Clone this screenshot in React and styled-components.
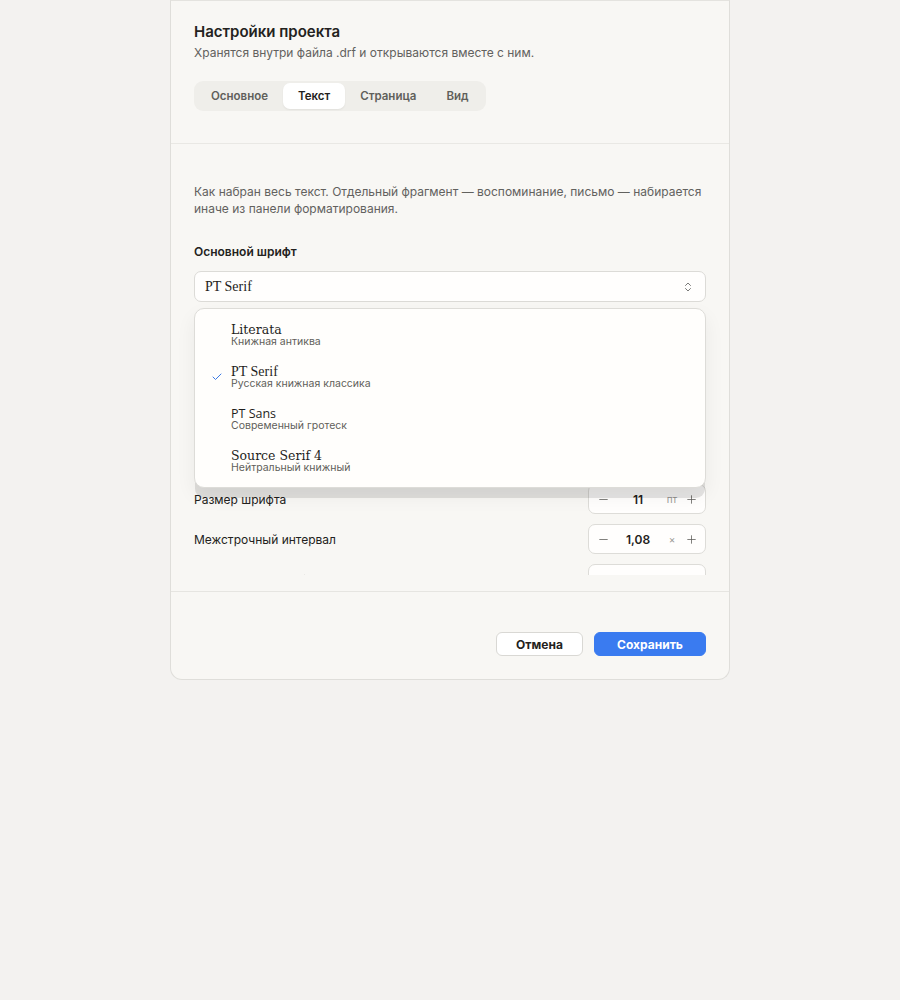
import { useState } from 'react'
import styled, { createGlobalStyle } from 'styled-components'
import { Check, ChevronsUpDown, Minus, Plus } from 'lucide-react'

const fonts = [
   { id: 'literata', name: 'Literata', note: 'Книжная антиква', family: '"DejaVu Serif", serif', size: 12.5 },
   { id: 'pt-serif', name: 'PT Serif', note: 'Русская книжная классика', family: '"Liberation Serif", serif', size: 14 },
   { id: 'pt-sans', name: 'PT Sans', note: 'Современный гротеск', family: '"Open Sans", sans-serif', size: 12.5 },
   { id: 'source-serif', name: 'Source Serif 4', note: 'Нейтральный книжный', family: '"DejaVu Serif", serif', size: 12.5 },
]

const tabs = ['Основное', 'Текст', 'Страница', 'Вид']

const steppers = [
   { label: 'Размер шрифта', value: '11', unit: 'пт' },
   { label: 'Межстрочный интервал', value: '1,08', unit: '×' },
   { label: 'Интервал после абзаца', value: '6', unit: 'пт' },
]

export default function App() {
   const [tab, setTab] = useState('Текст')
   const [font, setFont] = useState('pt-serif')
   const current = fonts.find((f) => f.id === font)

   return (
      <>
         <GlobalStyle />
         <Dialog>
            <Header>
               <Title>Настройки проекта</Title>
               <Subtitle>Хранятся внутри файла .drf и открываются вместе с ним.</Subtitle>
               <Tabs>
                  {tabs.map((t) => (
                     <Tab key={t} active={t === tab} onClick={() => setTab(t)}>
                        {t}
                     </Tab>
                  ))}
               </Tabs>
            </Header>

            <BodyWrap>
               <Scroll>
                  <Hint>
                     Как набран весь текст. Отдельный фрагмент — воспоминание, письмо — набирается
                     иначе из панели форматирования.
                  </Hint>

                  <Field first>
                     <Label>Основной шрифт</Label>
                     <SelectWrap>
                        <Select>
                           <SelectValue family={current.family}>{current.name}</SelectValue>
                           <ChevronsUpDown size={12} strokeWidth={2} color="#7a7a78" />
                        </Select>
                        <Menu>
                           {fonts.map((f) => (
                              <Option key={f.id} onClick={() => setFont(f.id)}>
                                 <CheckSlot>
                                    {f.id === font && <Check size={12} strokeWidth={2} color="#3b7ae6" />}
                                 </CheckSlot>
                                 <OptionText>
                                    <OptionName family={f.family} size={f.size}>{f.name}</OptionName>
                                    <OptionNote>{f.note}</OptionNote>
                                 </OptionText>
                              </Option>
                           ))}
                        </Menu>
                     </SelectWrap>
                  </Field>

                  <Field>
                     <Label>Шрифт заголовков</Label>
                     <Select>
                        <SelectValue family='"Liberation Serif", serif'>PT Serif</SelectValue>
                        <ChevronsUpDown size={12} strokeWidth={2} color="#7a7a78" />
                     </Select>
                  </Field>

                  <Field>
                     <Label>Шрифт примечаний</Label>
                     <Select>
                        <SelectValue family='"Open Sans", sans-serif'>PT Sans</SelectValue>
                        <ChevronsUpDown size={12} strokeWidth={2} color="#7a7a78" />
                     </Select>
                  </Field>

                  <Rows>
                     {steppers.map((s) => (
                        <Row key={s.label}>
                           <RowLabel>{s.label}</RowLabel>
                           <Stepper>
                              <StepButton>
                                 <Minus size={13} strokeWidth={1.4} />
                              </StepButton>
                              <StepValue>{s.value}</StepValue>
                              <StepUnit>{s.unit}</StepUnit>
                              <StepButton>
                                 <Plus size={13} strokeWidth={1.4} />
                              </StepButton>
                           </Stepper>
                        </Row>
                     ))}
                  </Rows>
               </Scroll>
            </BodyWrap>

            <Footer>
               <Button>Отмена</Button>
               <Button primary>Сохранить</Button>
            </Footer>
         </Dialog>
      </>
   )
}

const GlobalStyle = createGlobalStyle`
   body {
      margin: 0;
      background: #f3f2f0;
      font-family: Inter, "Noto Sans", sans-serif;
      color: #232220;
      -webkit-font-smoothing: antialiased;
   }
   * {
      box-sizing: border-box;
   }
`

const Dialog = styled.div`
   width: 560px;
   margin: 0 auto;
   background: #f8f7f4;
   border: 1px solid #dfdeda;
   border-top-color: #e4e3df;
   border-radius: 0 0 12px 12px;
`

const Header = styled.div`
   padding: 21px 23px 32px;
   border-bottom: 1px solid #e9e8e4;
`

const Title = styled.h2`
   margin: 0;
   font-size: 15px;
   line-height: 20px;
   font-weight: 600;
   color: #232220;
`

const Subtitle = styled.p`
   margin: 2px 0 0;
   font-size: 12px;
   line-height: 17px;
   color: #62615e;
`

const Tabs = styled.div`
   display: inline-flex;
   margin-top: 20px;
   padding: 2px;
   border-radius: 9px;
   background: #efeeea;
`

const Tab = styled.button`
   border: none;
   height: 26px;
   padding: 0 15px;
   border-radius: 7px;
   font-family: inherit;
   font-size: 11.5px;
   font-weight: 600;
   cursor: pointer;
   color: ${({ active }) => (active ? '#1f1e1c' : '#605f5b')};
   background: ${({ active }) => (active ? '#ffffff' : 'transparent')};
   box-shadow: ${({ active }) => (active ? '0 1px 2px rgba(0,0,0,0.06)' : 'none')};
`

const BodyWrap = styled.div`
   padding-bottom: 16px;
`

const Scroll = styled.div`
   height: 431px;
   overflow: hidden;
   padding: 39px 23px 0;
`

const Hint = styled.p`
   margin: 0;
   font-size: 12px;
   line-height: 17px;
   color: #62615e;
`

const Field = styled.div`
   margin-top: ${({ first }) => (first ? '27px' : '22px')};
`

const Label = styled.div`
   font-size: 12px;
   line-height: 16px;
   font-weight: 600;
   color: #232220;
   margin-bottom: 11px;
`

const SelectWrap = styled.div`
   position: relative;
`

const Select = styled.div`
   display: flex;
   align-items: center;
   justify-content: space-between;
   height: 31px;
   padding: 0 11px 0 10px;
   background: #fffefd;
   border: 1px solid #dcdbd7;
   border-radius: 7px;
`

const SelectValue = styled.span`
   font-family: ${({ family }) => family};
   font-size: 14px;
   color: #232220;
`

const Menu = styled.div`
   position: absolute;
   top: 37px;
   left: 0;
   right: 0;
   z-index: 10;
   padding: 5px 0;
   background: #fffefc;
   border: 1px solid #dddcd8;
   border-radius: 10px;
   box-shadow: 0 11px 0 -1px rgba(0, 0, 0, 0.1), 0 8px 20px rgba(0, 0, 0, 0.06);
`

const Option = styled.div`
   display: flex;
   align-items: center;
   height: 42px;
   cursor: pointer;
`

const CheckSlot = styled.span`
   display: flex;
   justify-content: center;
   width: 36px;
   padding-left: 8px;
`

const OptionText = styled.div`
   display: flex;
   flex-direction: column;
`

const OptionName = styled.span`
   font-family: ${({ family }) => family};
   font-size: ${({ size }) => size}px;
   line-height: 13px;
   color: #1f1e1c;
`

const OptionNote = styled.span`
   font-size: 10.5px;
   line-height: 11px;
   color: #5f5e5a;
`

const Rows = styled.div`
   display: flex;
   flex-direction: column;
   gap: 10px;
   margin-top: 22px;
`

const Row = styled.div`
   display: flex;
   align-items: center;
   justify-content: space-between;
`

const RowLabel = styled.span`
   font-size: 12px;
   color: #232220;
`

const Stepper = styled.div`
   display: flex;
   align-items: center;
   width: 118px;
   height: 30px;
   padding: 0 6px;
   background: #fffefd;
   border: 1px solid #dddcd8;
   border-radius: 7px;
`

const StepButton = styled.span`
   display: flex;
   align-items: center;
   justify-content: center;
   width: 16px;
   color: #5a5955;
`

const StepValue = styled.span`
   flex: 1;
   text-align: center;
   padding-left: 4px;
   font-size: 12px;
   font-weight: 600;
   color: #232220;
`

const StepUnit = styled.span`
   width: 22px;
   font-size: 10px;
   color: #9a9995;
   text-align: center;
`

const Footer = styled.div`
   display: flex;
   justify-content: flex-end;
   gap: 11px;
   padding: 40px 23px 23px;
   border-top: 1px solid #e6e5e1;
`

const Button = styled.button`
   height: 24px;
   padding: 0 ${({ primary }) => (primary ? '21px' : '19px')};
   min-width: ${({ primary }) => (primary ? '112px' : '87px')};
   border-radius: 6px;
   font-family: inherit;
   font-size: 12px;
   font-weight: 700;
   cursor: pointer;
   color: ${({ primary }) => (primary ? '#ffffff' : '#232220')};
   background: ${({ primary }) => (primary ? '#3a7bf0' : '#ffffff')};
   border: 1px solid ${({ primary }) => (primary ? '#3a7bf0' : '#d9d8d4')};
`
